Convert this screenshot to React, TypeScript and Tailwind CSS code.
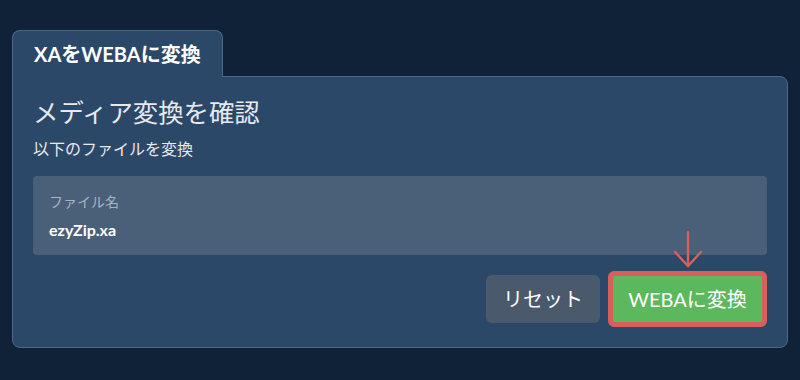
import React from 'react';

const font = { fontFamily: "Lato, 'Noto Sans CJK JP', sans-serif" };

const DownArrow = () => (
  <svg
    className="absolute left-1/2 -translate-x-1/2 bottom-[calc(100%+3px)]"
    width="30"
    height="37"
    viewBox="0 0 30 37"
    fill="none"
    stroke="#d9605a"
    strokeWidth="2.4"
    strokeLinecap="round"
  >
    <line x1="15" y1="1" x2="15" y2="35" />
    <polyline points="2,21 15,35 28,21" strokeLinejoin="round" />
  </svg>
);

export default function App() {
  return (
    <div className="min-h-screen w-full bg-[#0f2238] px-3 pt-[30px]" style={font}>
      <div className="flex flex-col">
        <div className="self-start relative z-10 -mb-px bg-[#2c4868] border border-b-0 border-[#4c6889] rounded-t-lg h-[47px] px-[21px] flex items-center">
          <span className="text-[20px] font-bold text-white leading-none">XAをWEBAに変換</span>
        </div>
        <div className="bg-[#2c4868] border border-[#4c6889] rounded-b-lg rounded-tr-lg p-5">
          <h1 className="text-[25.4px] leading-[30px] text-[#e6e9ee]">メディア変換を確認</h1>
          <p className="mt-[10px] text-[16px] leading-6 text-[#e6e9ee]">以下のファイルを変換</p>
          <div className="mt-[15px] h-[79px] bg-[#4a5f78] rounded px-4 pt-4">
            <div className="text-[14px] leading-5 text-[#a7b3c2]">ファイル名</div>
            <div className="mt-[6px] text-[16px] leading-6 font-bold text-white">ezyZip.xa</div>
          </div>
          <div className="mt-4 flex items-center justify-end gap-2">
            <button className="h-12 w-[114px] rounded-md bg-[#4a5a6c] text-[20px] text-white">
              リセット
            </button>
            <div className="relative">
              <DownArrow />
              <button className="h-14 w-[159px] rounded-md border-[5px] border-[#d9605a] bg-[#5cb85c] text-[20px] text-white">
                WEBAに変換
              </button>
            </div>
          </div>
        </div>
      </div>
    </div>
  );
}
